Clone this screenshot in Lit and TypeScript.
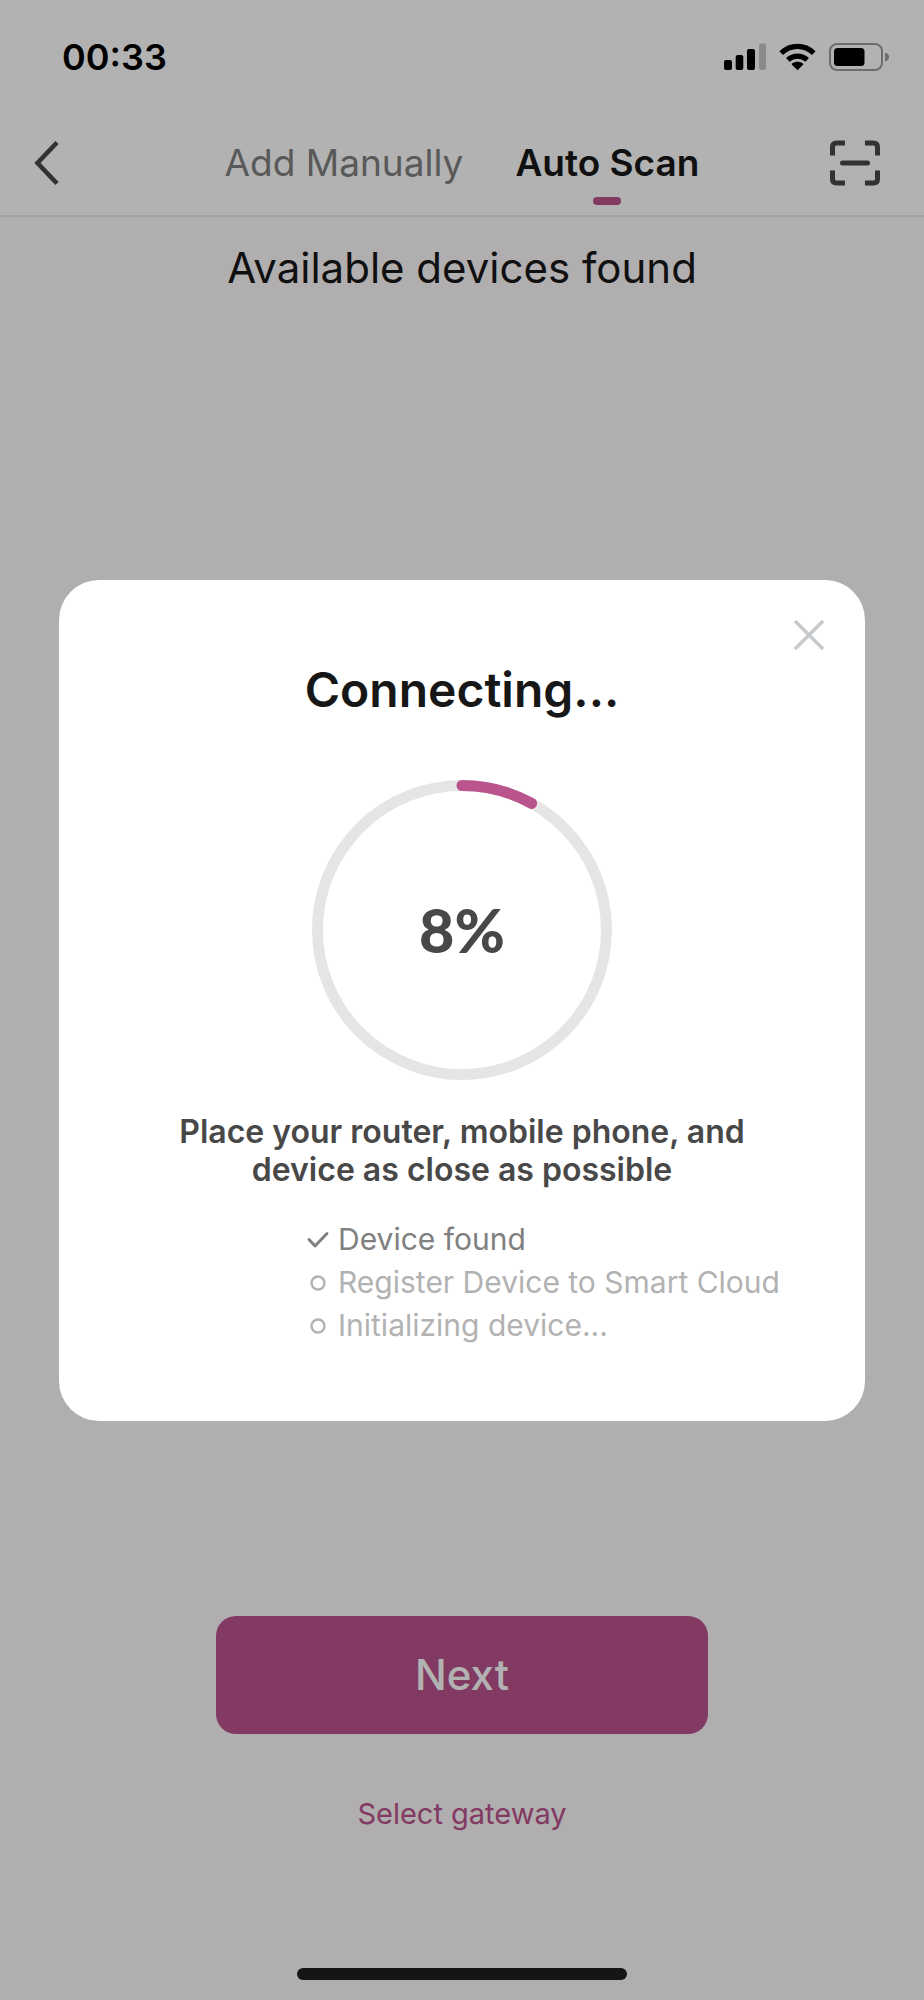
import { LitElement, html, css, svg } from "lit";
import { customElement, property } from "lit/decorators.js";
import { classMap } from "lit/directives/class-map.js";

type Step = { label: string; done: boolean };

@customElement("progress-ring")
export class ProgressRing extends LitElement {
  @property({ type: Number }) value = 0;

  static styles = css`
    :host {
      display: grid;
      place-items: center;
      width: 300px;
      height: 300px;
    }
    .ring,
    .value {
      grid-area: 1 / 1;
    }
    .ring {
      display: block;
      width: 300px;
      height: 300px;
    }
    .track,
    .bar {
      fill: none;
      stroke-width: 11;
    }
    .track {
      stroke: #e5e5e5;
    }
    .bar {
      stroke: #ba548d;
      stroke-linecap: round;
    }
    .value {
      font: 900 61px/72px Lato, sans-serif;
      color: #484848;
    }
  `;

  render() {
    return html`
      <svg class="ring" viewBox="0 0 300 300" aria-hidden="true">
        <circle class="track" cx="150" cy="150" r="144.5"></circle>
        ${svg`<circle class="bar" cx="150" cy="150" r="144.5" pathLength="100"
          stroke-dasharray="${this.value} 100" transform="rotate(-90 150 150)"></circle>`}
      </svg>
      <span class="value">${this.value}%</span>
    `;
  }
}

@customElement("app-root")
export class AppRoot extends LitElement {
  @property({ type: Number }) progress = 8;

  private steps: Step[] = [
    { label: "Device found", done: true },
    { label: "Register Device to Smart Cloud", done: false },
    { label: "Initializing device...", done: false },
  ];

  static styles = css`
    :host {
      display: block;
      position: relative;
      font-family: Inter, "Liberation Sans", sans-serif;
      color: #171717;
    }
    * {
      box-sizing: border-box;
    }
    svg {
      display: block;
    }
    button {
      margin: 0;
      padding: 0;
      border: 0;
      background: none;
      font: inherit;
      color: inherit;
    }
    .page {
      display: flex;
      flex-direction: column;
      min-height: 100vh;
      background: #fcf9fb;
    }
    .header {
      background: #fff;
      border-bottom: 2px solid #e8e8e8;
    }
    .status {
      display: flex;
      align-items: center;
      justify-content: space-between;
      height: 114px;
      padding: 0 34px 0 62px;
    }
    .clock {
      font-size: 36px;
      line-height: 44px;
      font-weight: 600;
      color: #000;
    }
    .indicators {
      display: flex;
      align-items: center;
      gap: 13px;
    }
    .nav {
      display: grid;
      grid-template-columns: 1fr auto 1fr;
      align-items: center;
      height: 101px;
      padding: 0 34px 4px;
    }
    .scan {
      justify-self: end;
      padding: 0 9px;
    }
    .back {
      justify-self: start;
    }
    .tabs {
      display: flex;
      gap: 52px;
    }
    .tab {
      position: relative;
      font-size: 37px;
      line-height: 48px;
      color: #808080;
    }
    .tab.active {
      font-weight: 600;
      color: #171717;
    }
    .tab.active::after {
      content: "";
      position: absolute;
      left: 50%;
      bottom: -18px;
      width: 28px;
      height: 8px;
      margin-left: -14px;
      border-radius: 4px;
      background: #ba548d;
    }
    .title {
      margin: 23px 0 0;
      text-align: center;
      font-size: 42px;
      line-height: 56px;
      font-weight: 400;
    }
    .actions {
      display: flex;
      flex-direction: column;
      align-items: center;
      gap: 58px;
      margin-top: auto;
      padding: 0 216px 164px;
    }
    .next {
      width: 100%;
      height: 118px;
      border-radius: 20px;
      background: #ba548d;
      color: #fff;
      font-size: 42px;
      line-height: 56px;
      font-weight: 500;
    }
    .gateway {
      font-size: 29px;
      line-height: 44px;
      color: #ba548d;
      text-decoration: none;
    }
    .overlay {
      position: absolute;
      inset: 0;
      display: flex;
      align-items: center;
      justify-content: center;
      padding: 0 59px;
      background: rgba(0, 0, 0, 0.3);
    }
    .dialog {
      position: relative;
      display: flex;
      flex-direction: column;
      align-items: center;
      width: 100%;
      padding: 78px 60px 74px;
      border-radius: 40px;
      background: #fff;
    }
    .close {
      position: absolute;
      top: 40px;
      right: 41px;
    }
    .heading {
      margin: 0 0 58px;
      font-size: 48px;
      line-height: 64px;
      font-weight: 600;
    }
    .hint {
      margin: 33px 0 0;
      max-width: 620px;
      text-align: center;
      font-size: 32px;
      line-height: 38px;
      font-weight: 600;
      color: #484848;
    }
    .steps {
      display: flex;
      flex-direction: column;
      align-self: flex-start;
      margin: 29px 0 0;
      padding: 0 0 0 187px;
      list-style: none;
      font-size: 30px;
      line-height: 43px;
      color: #b2b2b2;
    }
    .step {
      display: flex;
      align-items: center;
      gap: 8px;
      white-space: nowrap;
    }
    .step.done {
      color: #808080;
    }
    .home {
      position: absolute;
      left: 50%;
      bottom: 20px;
      width: 330px;
      height: 12px;
      border-radius: 6px;
      background: #171415;
      transform: translateX(-50%);
    }
  `;

  private renderStep(step: Step) {
    return html`
      <li class=${classMap({ step: true, done: step.done })}>
        <svg width="24" height="24" viewBox="0 0 24 24" fill="none" stroke="currentColor" aria-hidden="true">
          ${step.done
            ? svg`<path d="M3 12.500 9 19 21 6.500" stroke-width="3" stroke-linecap="round" stroke-linejoin="round"></path>`
            : svg`<circle cx="12" cy="13" r="6.500" stroke-width="2.400"></circle>`}
        </svg>
        <span>${step.label}</span>
      </li>
    `;
  }

  render() {
    return html`
      <main class="page">
        <header class="header">
          <div class="status">
            <span class="clock">00:33</span>
            <div class="indicators">
              <svg width="42" height="28" viewBox="0 0 42 28" aria-hidden="true">
                <rect x="0" y="17" width="8" height="10" rx="2"></rect>
                <rect x="11.700" y="12" width="7.600" height="15" rx="2"></rect>
                <rect x="23" y="6" width="8" height="21" rx="2"></rect>
                <rect x="35" y="0.500" width="7" height="26.500" rx="2" fill="#c8c8c8"></rect>
              </svg>
              <svg width="37" height="28" viewBox="0 0 37 28" aria-hidden="true">
                <path d="M18.500 27.300 12.900 21.700C12.600 21.400 12.600 20.800 13 20.500 16.200 18 20.800 18 24 20.500 24.400 20.800 24.400 21.400 24.100 21.700Z"></path>
                <path d="M8.800 16.900C14.300 11.800 22.700 11.800 28.200 16.900" fill="none" stroke="#000" stroke-width="5.200"></path>
                <path d="M2.200 10.200C11.400 1.200 25.600 1.200 34.800 10.200" fill="none" stroke="#000" stroke-width="5.200"></path>
              </svg>
              <svg width="61" height="28" viewBox="0 0 61 28" aria-hidden="true">
                <rect x="1" y="1" width="52" height="26" rx="7" fill="none" stroke="#9c9c9c" stroke-width="2"></rect>
                <rect x="5" y="5" width="30.500" height="18" rx="3.500"></rect>
                <path d="M56 9.500C59 10.300 60 12 60 14S59 17.700 56 18.500Z" fill="#9c9c9c"></path>
              </svg>
            </div>
          </div>
          <nav class="nav">
            <button class="back" aria-label="Back">
              <svg width="26" height="46" viewBox="0 0 26 46" fill="none" stroke="#484848" stroke-width="4.600">
                <path d="M23 2.500 3.500 23 23 43.500"></path>
              </svg>
            </button>
            <div class="tabs">
              <button class="tab">Add Manually</button>
              <button class="tab active" aria-current="page">Auto Scan</button>
            </div>
            <button class="scan" aria-label="Scan code">
              <svg width="52" height="46" viewBox="0 0 52 46" fill="none" stroke="#484848" stroke-width="5">
                <path d="M3.500 15.500V7Q3.500 3 7.500 3H16M36 3H44.500Q48.500 3 48.500 7V15.500M48.500 30.500V39Q48.500 43 44.500 43H36M16 43H7.500Q3.500 43 3.500 39V30.500"></path>
                <path d="M13.500 23H38.500" stroke-linecap="round"></path>
              </svg>
            </button>
          </nav>
        </header>
        <h1 class="title">Available devices found</h1>
        <div class="actions">
          <button class="next">Next</button>
          <a class="gateway" href="#gateway">Select gateway</a>
        </div>
      </main>
      <div class="overlay">
        <section class="dialog" role="dialog" aria-labelledby="dialog-title">
          <button class="close" aria-label="Close">
            <svg width="30" height="30" viewBox="0 0 30 30" fill="none" stroke="#c6cacd" stroke-width="3.400">
              <path d="M1 1 29 29M29 1 1 29"></path>
            </svg>
          </button>
          <h2 class="heading" id="dialog-title">Connecting...</h2>
          <progress-ring .value=${this.progress}></progress-ring>
          <p class="hint">Place your router, mobile phone, and device as close as possible</p>
          <ul class="steps">
            ${this.steps.map((step) => this.renderStep(step))}
          </ul>
        </section>
      </div>
      <div class="home"></div>
    `;
  }
}
